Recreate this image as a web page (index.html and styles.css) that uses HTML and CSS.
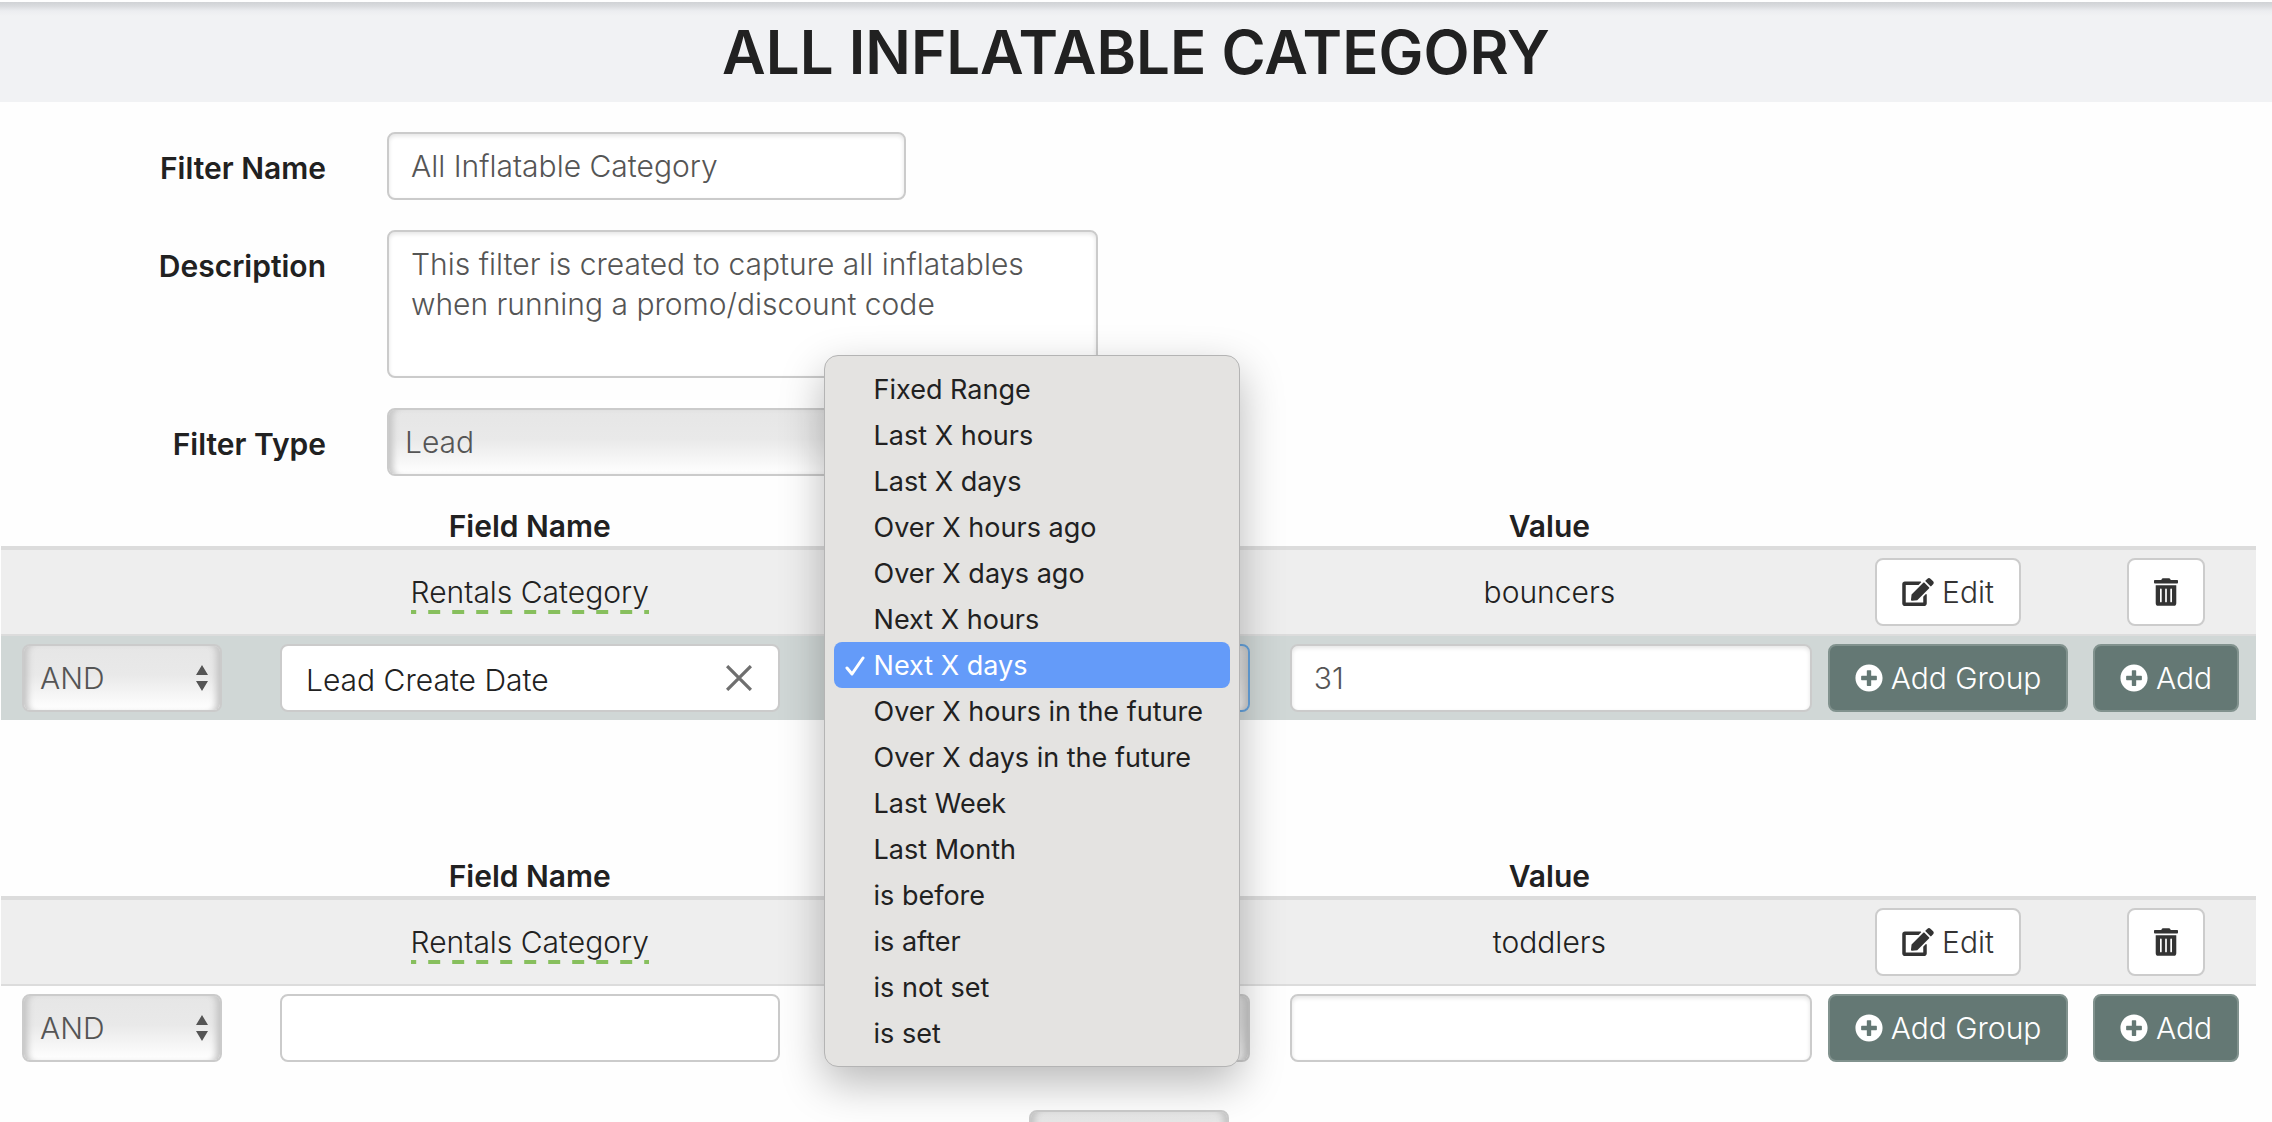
FILE: index.html
```html
<!DOCTYPE html>
<html lang="en">
<head>
  <meta charset="utf-8">
  <title>All Inflatable Category</title>
  <link rel="stylesheet" href="styles.css">
</head>
<body>
  <svg class="sprite" aria-hidden="true">
    <symbol id="icon-edit" viewBox="0 0 576 512"><path d="M402.6 83.2l90.2 90.2c3.8 3.8 3.8 10 0 13.8L274.4 405.6l-92.8 10.3c-12.4 1.4-22.9-9.1-21.5-21.5l10.3-92.8L388.8 83.2c3.8-3.8 10-3.8 13.8 0zm162-22.9l-48.8-48.8c-15.2-15.2-39.9-15.2-55.2 0l-35.4 35.4c-3.8 3.8-3.8 10 0 13.8l90.2 90.2c3.8 3.8 10 3.8 13.8 0l35.4-35.4c15.2-15.3 15.2-40 0-55.2zM384 346.2V448H64V128h229.8c3.2 0 6.2-1.3 8.5-3.5l40-40c7.6-7.6 2.2-20.5-8.5-20.5H48C21.5 64 0 85.5 0 112v352c0 26.5 21.5 48 48 48h352c26.5 0 48-21.5 48-48V306.2c0-10.7-12.9-16-20.5-8.5l-40 40c-2.2 2.3-3.5 5.3-3.5 8.5z"/></symbol>
    <symbol id="icon-trash" viewBox="0 0 448 512"><path d="M32 464a48 48 0 0 0 48 48h288a48 48 0 0 0 48-48V128H32zm272-256a16 16 0 0 1 32 0v224a16 16 0 0 1-32 0zm-96 0a16 16 0 0 1 32 0v224a16 16 0 0 1-32 0zm-96 0a16 16 0 0 1 32 0v224a16 16 0 0 1-32 0zM432 32H312l-9.4-18.7A24 24 0 0 0 281.1 0H166.8a23.72 23.72 0 0 0-21.4 13.3L136 32H16A16 16 0 0 0 0 48v32a16 16 0 0 0 16 16h416a16 16 0 0 0 16-16V48a16 16 0 0 0-16-16z"/></symbol>
    <symbol id="icon-plus" viewBox="0 0 512 512"><path d="M256 8C119 8 8 119 8 256s111 248 248 248 248-111 248-248S393 8 256 8zm144 276c0 6.6-5.4 12-12 12h-92v92c0 6.6-5.4 12-12 12h-56c-6.600 0-12-5.400-12-12v-92h-92c-6.600 0-12-5.400-12-12v-56c0-6.600 5.400-12 12-12h92v-92c0-6.600 5.400-12 12-12h56c6.600 0 12 5.400 12 12v92h92c6.600 0 12 5.400 12 12v56z"/></symbol>
  </svg>

  <header class="page-header">
    <h1>ALL INFLATABLE CATEGORY</h1>
  </header>

  <main>
    <form class="filter-form">
      <label class="form-label" for="filter-name">Filter Name</label>
      <input class="control name-control" id="filter-name" type="text" value="All Inflatable Category">

      <label class="form-label" for="description">Description</label>
      <textarea class="control description-control" id="description">This filter is created to capture all inflatables when running a promo/discount code</textarea>

      <label class="form-label" for="filter-type">Filter Type</label>
      <select class="control select name-control" id="filter-type"><option>Lead</option></select>
    </form>

    <table class="rules">
      <colgroup>
        <col class="col-join"><col><col class="col-operator"><col class="col-value"><col class="col-edit"><col class="col-remove">
      </colgroup>
      <thead>
        <tr><td></td><th scope="col">Field Name</th><td></td><th scope="col">Value</th><td></td><td></td></tr>
      </thead>
      <tbody>
        <tr class="rule">
          <td></td>
          <td><span class="field-name">Rentals Category</span></td>
          <td></td>
          <td>bouncers</td>
          <td><button class="btn" type="button"><svg class="icon icon-wide"><use href="#icon-edit"/></svg>Edit</button></td>
          <td><button class="btn" type="button" aria-label="Delete"><svg class="icon icon-narrow"><use href="#icon-trash"/></svg></button></td>
        </tr>
        <tr class="new-rule active">
          <td class="join-cell"><select class="control select arrows" aria-label="Join"><option>AND</option></select></td>
          <td class="field-cell">
            <div class="control picker">
              <input class="picker-input" type="text" aria-label="Field name" value="Lead Create Date">
              <button class="picker-clear" type="button" aria-label="Clear">
                <svg viewBox="0 0 24 24"><path d="M1 1L23 23M23 1L1 23"/></svg>
              </button>
            </div>
          </td>
          <td class="operator-cell">
            <select class="control select focused" aria-label="Operator"><option>Next X days</option></select>
            <ul class="menu" role="listbox" aria-label="Operator">
              <li role="option">Fixed Range</li>
              <li role="option">Last X hours</li>
              <li role="option">Last X days</li>
              <li role="option">Over X hours ago</li>
              <li role="option">Over X days ago</li>
              <li role="option">Next X hours</li>
              <li role="option" class="selected" aria-selected="true"><svg class="check" viewBox="0 0 20 20"><path d="M2 12L7 18L18 2"/></svg>Next X days</li>
              <li role="option">Over X hours in the future</li>
              <li role="option">Over X days in the future</li>
              <li role="option">Last Week</li>
              <li role="option">Last Month</li>
              <li role="option">is before</li>
              <li role="option">is after</li>
              <li role="option">is not set</li>
              <li role="option">is set</li>
            </ul>
          </td>
          <td class="value-cell"><input class="control" type="text" aria-label="Value" value="31"></td>
          <td><button class="btn btn-primary" type="button"><svg class="icon"><use href="#icon-plus"/></svg>Add Group</button></td>
          <td><button class="btn btn-primary" type="button"><svg class="icon"><use href="#icon-plus"/></svg>Add</button></td>
        </tr>
      </tbody>
    </table>

    <table class="rules">
      <colgroup>
        <col class="col-join"><col><col class="col-operator"><col class="col-value"><col class="col-edit"><col class="col-remove">
      </colgroup>
      <thead>
        <tr><td></td><th scope="col">Field Name</th><td></td><th scope="col">Value</th><td></td><td></td></tr>
      </thead>
      <tbody>
        <tr class="rule">
          <td></td>
          <td><span class="field-name">Rentals Category</span></td>
          <td></td>
          <td>toddlers</td>
          <td><button class="btn" type="button"><svg class="icon icon-wide"><use href="#icon-edit"/></svg>Edit</button></td>
          <td><button class="btn" type="button" aria-label="Delete"><svg class="icon icon-narrow"><use href="#icon-trash"/></svg></button></td>
        </tr>
        <tr class="new-rule">
          <td class="join-cell"><select class="control select arrows" aria-label="Join"><option>AND</option></select></td>
          <td class="field-cell"><input class="control flat" type="text" aria-label="Field name"></td>
          <td class="operator-cell"><select class="control select" aria-label="Operator"><option></option></select></td>
          <td class="value-cell"><input class="control" type="text" aria-label="Value"></td>
          <td><button class="btn btn-primary" type="button"><svg class="icon"><use href="#icon-plus"/></svg>Add Group</button></td>
          <td><button class="btn btn-primary" type="button"><svg class="icon"><use href="#icon-plus"/></svg>Add</button></td>
        </tr>
      </tbody>
    </table>

    <div class="group-join">
      <select class="control select arrows" aria-label="Join groups"><option>AND</option></select>
    </div>
  </main>
</body>
</html>
```
FILE: styles.css
```css
* {
  box-sizing: border-box;
}

body {
  margin: 0;
  height: 100vh;
  overflow: hidden;
  background: #fefefe;
  color: #212121;
  font: 300 30px/40px Inter, sans-serif;
}

.sprite {
  display: none;
}

.page-header {
  margin-top: 2px;
  padding: 16px 0;
  background: linear-gradient(#d0d2d5, #d9dbde 4px, #ecedf0 9px, #f1f2f4 14px);
  text-align: center;
}

.page-header h1 {
  margin: 0;
  font-size: 60px;
  line-height: 68px;
  font-weight: 600;
}

/* Form controls */

.control {
  display: block;
  width: 100%;
  height: 68px;
  margin: 0;
  padding: 0 22px;
  border: 2px solid #cbcbcb;
  border-radius: 8px;
  background: #fff;
  box-shadow: inset 0 2px 4px #e4e4e4;
  color: #555;
  font: inherit;
  outline: none;
}

.flat {
  box-shadow: none;
}

.select {
  appearance: none;
  padding: 0 16px;
  background: linear-gradient(#e6e6e6, #e9e9e9 45%, #fff);
  box-shadow: inset 8px 0 6px -4px #c6c6c6, inset -8px 0 6px -4px #c6c6c6;
}

.arrows {
  background:
    url("data:image/svg+xml,%3Csvg xmlns='http://www.w3.org/2000/svg' viewBox='0 0 12 26'%3E%3Cpath d='M6 0L12 10H0zM6 26L0 16H12z' fill='%23555'/%3E%3C/svg%3E") no-repeat right 12px center / 12px 26px,
    linear-gradient(#e6e6e6, #e9e9e9 45%, #fff);
}

.focused {
  border-color: #66a3dd;
}

.filter-form {
  display: grid;
  grid-template-columns: 326px 1fr;
  gap: 30px 61px;
  padding: 30px 0;
}

.form-label {
  padding-top: 16px;
  text-align: right;
  font-weight: 600;
}

.name-control {
  width: 519px;
}

.description-control {
  width: 711px;
  height: 148px;
  padding: 12px 22px;
  resize: none;
}

/* Rule tables */

.rules {
  width: calc(100% - 17px);
  margin: 0 16px 136px 1px;
  border-collapse: separate;
  border-spacing: 0;
  table-layout: fixed;
  text-align: center;
}

.rules + .rules {
  margin-bottom: 40px;
}

.col-join {
  width: 242px;
}

.col-operator {
  width: 20.5%;
}

.col-value {
  width: 24%;
}

.col-edit {
  width: 256px;
}

.col-remove {
  width: 180px;
}

.rules th,
.rules td {
  padding: 0;
}

.rules th {
  font-weight: 600;
}

.rules tbody td {
  padding: 8px 0;
}

.rule td {
  border-top: 4px solid #dcdcdc;
  border-bottom: 2px solid #dcdcdc;
  background: #eee;
}

.active td {
  background: #d0d7d6;
}

.rules .join-cell {
  padding: 8px 21px;
}

.rules .field-cell {
  padding: 8px 37px;
}

.rules .operator-cell {
  position: relative;
  padding: 8px 29px;
}

.rules .value-cell {
  padding: 8px 8px 8px 11px;
}

.field-name {
  display: inline-block;
  padding: 2px 0;
  background: linear-gradient(90deg, transparent 6px, #87bf5d 6px 18px, transparent 18px) center bottom / 24px 4px repeat-x;
}

.picker {
  display: flex;
  align-items: center;
  padding: 0 26px 0 24px;
  box-shadow: none;
}

.picker-input {
  flex: 1;
  min-width: 0;
  height: 64px;
  padding: 4px 0 0;
  border: 0;
  background: none;
  color: #212121;
  font: inherit;
  outline: none;
}

.picker-clear {
  display: flex;
  padding: 0;
  border: 0;
  background: none;
}

.picker-clear svg {
  width: 26px;
  height: 26px;
  fill: none;
  stroke: #6f6f6f;
  stroke-width: 3;
}

/* Buttons */

.btn {
  display: inline-flex;
  align-items: center;
  gap: 8px;
  height: 68px;
  padding: 0 25px;
  border: 2px solid #ccc;
  border-radius: 8px;
  background: #fff;
  color: #333;
  font: inherit;
  vertical-align: top;
}

.btn-primary {
  border-color: #81928e;
  background: #647874;
  color: #fff;
}

.icon {
  width: 28px;
  height: 28px;
  fill: currentColor;
}

.icon-wide {
  width: 32px;
}

.icon-narrow {
  width: 24px;
}

/* Drop-down menu over the operator select */

.menu {
  position: absolute;
  z-index: 10;
  top: -281px;
  left: 7px;
  width: 416px;
  margin: 0;
  padding: 10px 9px;
  border: 1px solid #b4b4b4;
  border-radius: 14px;
  background: #e4e3e1;
  box-shadow: 0 16px 44px rgba(0, 0, 0, 0.28);
  font-size: 27px;
  font-weight: 400;
  line-height: 46px;
  text-align: left;
  list-style: none;
}

.menu li {
  position: relative;
  height: 46px;
  padding: 1px 0 0 40px;
  border-radius: 8px;
}

.menu .selected {
  background: #649bf9;
  color: #fff;
}

.check {
  position: absolute;
  top: 14px;
  left: 11px;
  width: 20px;
  height: 20px;
  fill: none;
  stroke: #fff;
  stroke-width: 3;
  stroke-linecap: round;
  stroke-linejoin: round;
}

/* Join between rule groups, centred on the tables above */

.group-join {
  display: flex;
  justify-content: center;
  margin-right: 14px;
}

.group-join .control {
  width: 200px;
}
```
